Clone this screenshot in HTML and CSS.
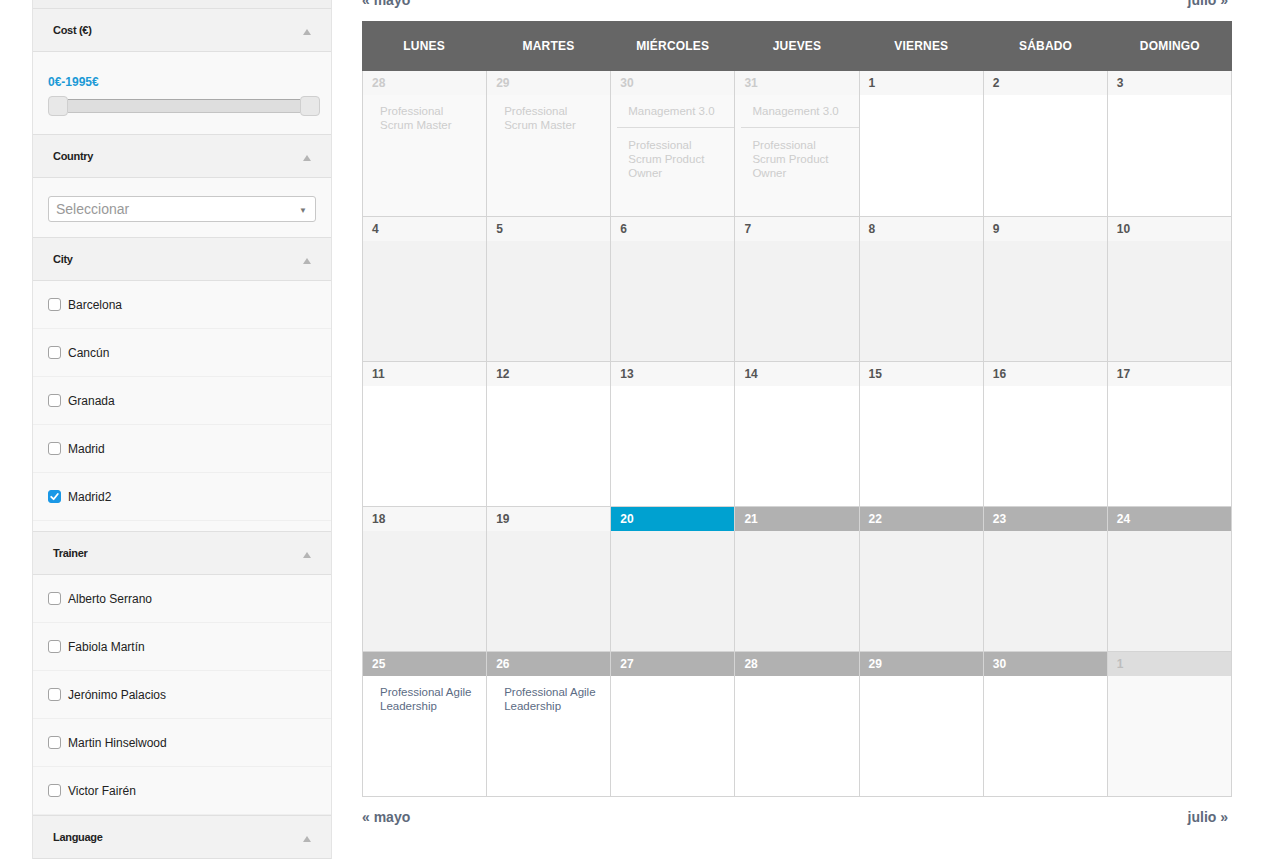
FILE: index.html
```html
<!DOCTYPE html>
<html lang="es">
<head>
  <meta charset="UTF-8" />
  <title>Calendario de cursos</title>
  <link rel="stylesheet" href="styles.css">
</head>
<body>

  <div class="page">

    <aside class="filters">
      <div class="filter-tail"></div>

      <section class="filter">
        <div class="filter-head">Cost (€)<span class="caret"></span></div>
        <div class="filter-body cost">
          <div class="range-label">0€-1995€</div>
          <div class="range">
            <span class="handle"></span><span class="track"></span><span class="handle"></span>
          </div>
        </div>
      </section>

      <section class="filter">
        <div class="filter-head">Country<span class="caret"></span></div>
        <div class="filter-body country">
          <div class="select">Seleccionar<span class="select-arrow">▼</span></div>
        </div>
      </section>

      <section class="filter">
        <div class="filter-head">City<span class="caret"></span></div>
        <div class="filter-body list city">
          <label class="option"><span class="check"></span>Barcelona</label>
          <label class="option"><span class="check"></span>Cancún</label>
          <label class="option"><span class="check"></span>Granada</label>
          <label class="option"><span class="check"></span>Madrid</label>
          <label class="option"><span class="check checked"><svg viewBox="0 0 13 13" width="13" height="13"><polyline points="3.2,6.8 5.6,9.2 9.8,4" fill="none" stroke="#fff" stroke-width="1.8" stroke-linecap="round" stroke-linejoin="round"/></svg></span>Madrid2</label>
        </div>
      </section>

      <section class="filter">
        <div class="filter-head">Trainer<span class="caret"></span></div>
        <div class="filter-body list">
          <label class="option"><span class="check"></span>Alberto Serrano</label>
          <label class="option"><span class="check"></span>Fabiola Martín</label>
          <label class="option"><span class="check"></span>Jerónimo Palacios</label>
          <label class="option"><span class="check"></span>Martin Hinselwood</label>
          <label class="option"><span class="check"></span>Victor Fairén</label>
        </div>
      </section>

      <section class="filter">
        <div class="filter-head">Language<span class="caret"></span></div>
      </section>
    </aside>

    <main class="calendar-wrap">
      <nav class="month-nav top"><a href="#">« mayo</a><a href="#">julio »</a></nav>

      <div class="calendar">
        <div class="weekdays">
          <div>Lunes</div><div>Martes</div><div>Miércoles</div><div>Jueves</div><div>Viernes</div><div>Sábado</div><div>Domingo</div>
        </div>

        <div class="week first">
          <div class="day other"><div class="num">28</div>
            <div class="event past">Professional Scrum Master</div>
          </div>
          <div class="day other"><div class="num">29</div>
            <div class="event past">Professional Scrum Master</div>
          </div>
          <div class="day other"><div class="num">30</div>
            <div class="event past">Management 3.0</div>
            <div class="event past">Professional Scrum Product Owner</div>
          </div>
          <div class="day other"><div class="num">31</div>
            <div class="event past">Management 3.0</div>
            <div class="event past">Professional Scrum Product Owner</div>
          </div>
          <div class="day"><div class="num">1</div></div>
          <div class="day"><div class="num">2</div></div>
          <div class="day"><div class="num">3</div></div>
        </div>

        <div class="week shaded">
          <div class="day"><div class="num">4</div></div>
          <div class="day"><div class="num">5</div></div>
          <div class="day"><div class="num">6</div></div>
          <div class="day"><div class="num">7</div></div>
          <div class="day"><div class="num">8</div></div>
          <div class="day"><div class="num">9</div></div>
          <div class="day"><div class="num">10</div></div>
        </div>

        <div class="week">
          <div class="day"><div class="num">11</div></div>
          <div class="day"><div class="num">12</div></div>
          <div class="day"><div class="num">13</div></div>
          <div class="day"><div class="num">14</div></div>
          <div class="day"><div class="num">15</div></div>
          <div class="day"><div class="num">16</div></div>
          <div class="day"><div class="num">17</div></div>
        </div>

        <div class="week shaded">
          <div class="day"><div class="num">18</div></div>
          <div class="day"><div class="num">19</div></div>
          <div class="day"><div class="num today">20</div></div>
          <div class="day"><div class="num ahead">21</div></div>
          <div class="day"><div class="num ahead">22</div></div>
          <div class="day"><div class="num ahead">23</div></div>
          <div class="day"><div class="num ahead">24</div></div>
        </div>

        <div class="week">
          <div class="day"><div class="num ahead">25</div>
            <div class="event">Professional Agile Leadership</div>
          </div>
          <div class="day"><div class="num ahead">26</div>
            <div class="event">Professional Agile Leadership</div>
          </div>
          <div class="day"><div class="num ahead">27</div></div>
          <div class="day"><div class="num ahead">28</div></div>
          <div class="day"><div class="num ahead">29</div></div>
          <div class="day"><div class="num ahead">30</div></div>
          <div class="day next"><div class="num">1</div></div>
        </div>
      </div>

      <nav class="month-nav bottom"><a href="#">« mayo</a><a href="#">julio »</a></nav>
    </main>

  </div>

</body>
</html>
```

FILE: styles.css
```css
body {
  margin: 0;
  font-family: "Liberation Sans", Arial, sans-serif;
  color: #333;
  background: #fff;
}

.page {
  display: flex;
  align-items: flex-start;
  gap: 30px;
  padding-left: 32px;
}

/* ---- filter sidebar ---- */

.filters {
  width: 300px;
  box-sizing: border-box;
  border-left: 1px solid #e4e4e4;
  border-right: 1px solid #e4e4e4;
  background: #f9f9f9;
}

.filter-tail {
  height: 8px;
  background: #f0f0f0;
  border-bottom: 1px solid #e0e0e0;
}

.filter-head {
  height: 42px;
  display: flex;
  align-items: center;
  justify-content: space-between;
  padding: 0 20px 0 20px;
  background: #f2f2f2;
  border-bottom: 1px solid #e0e0e0;
  font-weight: bold;
  font-size: 11px;
  letter-spacing: -0.3px;
  color: #222;
}

.caret {
  width: 0;
  height: 0;
  border-left: 4px solid transparent;
  border-right: 4px solid transparent;
  border-bottom: 6px solid #b5b5b5;
  margin-top: 3px;
}

.filter-body {
  border-bottom: 1px solid #e0e0e0;
}

.cost {
  padding: 23px 11px 18px 15px;
}

.range-label {
  font-weight: bold;
  font-size: 12px;
  line-height: 14px;
  color: #1c9ad6;
  margin-bottom: 7px;
}

.range {
  display: flex;
  align-items: center;
  height: 20px;
}

.handle {
  width: 20px;
  height: 20px;
  box-sizing: border-box;
  border: 1px solid #cfcfcf;
  border-radius: 4px;
  background: #e8e8e8;
}

.track {
  flex: 1;
  height: 14px;
  box-sizing: border-box;
  background: #dedede;
  border-top: 1px solid #a9a9a9;
  border-bottom: 1px solid #c4c4c4;
}

.country {
  padding: 18px 15px 15px 15px;
}

.select {
  height: 26px;
  box-sizing: border-box;
  display: flex;
  align-items: center;
  justify-content: space-between;
  padding: 0 8px 0 7px;
  background: #fff;
  border: 1px solid #c8c8c8;
  border-radius: 3px;
  font-size: 14px;
  color: #999;
}

.select-arrow {
  font-size: 8px;
  color: #777;
  margin-top: 2px;
}

.city {
  padding-bottom: 10px;
}

.option {
  height: 48px;
  box-sizing: border-box;
  display: flex;
  align-items: center;
  gap: 7px;
  padding-left: 15px;
  border-bottom: 1px solid #efefef;
  font-size: 12px;
  color: #222;
}

.check {
  width: 13px;
  height: 13px;
  box-sizing: border-box;
  border: 1px solid #a3a3a3;
  border-radius: 3px;
  background: #fff;
}

.check.checked {
  border-color: #1a98e6;
  background: #1a98e6;
}

.check svg {
  display: block;
  margin: -1px;
}

/* ---- month calendar ---- */

.calendar-wrap {
  width: 870px;
}

.month-nav {
  display: flex;
  justify-content: space-between;
  padding-right: 4px;
  line-height: 18px;
}

.month-nav a {
  font-weight: bold;
  font-size: 14px;
  color: #5e6a7b;
  text-decoration: none;
}

.month-nav.top {
  margin-top: -9px;
  margin-bottom: 12px;
}

.month-nav.bottom {
  margin-top: 11px;
}

.weekdays {
  display: grid;
  grid-template-columns: repeat(7, 1fr);
  height: 50px;
  background: #666;
  color: #fff;
  font-weight: bold;
  font-size: 12px;
  line-height: 50px;
  text-align: center;
  text-transform: uppercase;
  letter-spacing: 0.2px;
}

.week {
  display: grid;
  grid-template-columns: repeat(7, 1fr);
  border-left: 1px solid #d4d4d4;
}

.day {
  height: 145px;
  box-sizing: border-box;
  border-right: 1px solid #d4d4d4;
  border-bottom: 1px solid #d4d4d4;
  background: #fff;
  overflow: hidden;
}

.week.first .day {
  height: 146px;
}

.week.shaded .day {
  background: #f2f2f2;
}

.num {
  height: 24px;
  padding-left: 9px;
  line-height: 24px;
  background: #f7f7f7;
  font-weight: bold;
  font-size: 12px;
  color: #555;
}

.num.today {
  background: #00a1d0;
  color: #fff;
}

.num.ahead {
  background: #b1b1b1;
  color: #fff;
}

.day.other {
  background: #f9f9f9;
}

.day.other .num {
  color: #cbcbcb;
}

.day.next {
  background: #f9f9f9;
}

.day.next .num {
  background: #dddddd;
  color: #bdbdbd;
}

.event {
  margin-left: 6px;
  padding: 9px 11px 9px 11px;
  font-size: 11.5px;
  line-height: 14px;
  color: #5b6b84;
}

.event.past {
  color: #cdcdcd;
}

.event + .event {
  border-top: 1px solid #dcdcdc;
  padding-top: 10px;
}
```
